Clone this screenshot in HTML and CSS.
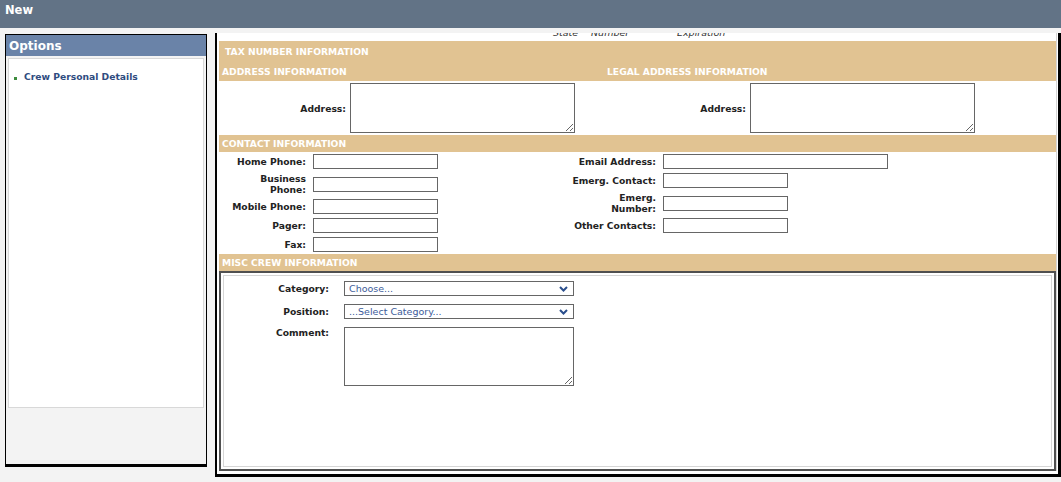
FILE: index.html
```html
<!doctype html>
<html>
<head>
<meta charset="utf-8">
<title>New</title>
<link rel="stylesheet" href="styles.css">
</head>

<body>
<div class="topbar">New</div>
<div class="wrap">
	<div class="side">
		<div class="side-head">Options</div>
		<div class="side-box">
			<ul class="menu">
				<li><a href="#">Crew Personal Details</a></li>
			</ul>
		</div>
	</div>
	<div class="main">
		<div class="inner">
			<div class="cut">
				<div class="cut-row"><span class="c1">State</span><span class="c2">Number</span><span class="c3">Expiration</span></div>
			</div>
			<div class="band tall">
				<div class="band-row1">TAX NUMBER INFORMATION</div>
				<div class="band-row2"><span class="half">ADDRESS INFORMATION</span><span>LEGAL ADDRESS INFORMATION</span></div>
			</div>
			<div class="addr">
				<div class="addr-col"><label>Address:</label><textarea></textarea></div>
				<div class="addr-col"><label>Address:</label><textarea></textarea></div>
			</div>
			<div class="band">CONTACT INFORMATION</div>
			<div class="contact">
				<div class="fields left">
					<label>Home Phone:</label><input type="text">
					<label>Business<br>Phone:</label><input type="text">
					<label>Mobile Phone:</label><input type="text">
					<label>Pager:</label><input type="text">
					<label>Fax:</label><input type="text">
				</div>
				<div class="fields">
					<label>Email Address:</label><input type="text" class="wide">
					<label>Emerg. Contact:</label><input type="text">
					<label>Emerg.<br>Number:</label><input type="text">
					<label>Other Contacts:</label><input type="text">
				</div>
			</div>
			<div class="band">MISC CREW INFORMATION</div>
			<div class="misc">
				<div class="misc-inner">
					<div class="fields misc-grid">
						<label>Category:</label>
						<span class="sel"><select><option>Choose...</option></select><svg width="9" height="6" viewBox="0 0 9 6"><path d="M1 1 L4.5 4.5 L8 1" fill="none" stroke="#2a4e8c" stroke-width="2"/></svg></span>
						<label>Position:</label>
						<span class="sel"><select><option>...Select Category...</option></select><svg width="9" height="6" viewBox="0 0 9 6"><path d="M1 1 L4.5 4.5 L8 1" fill="none" stroke="#2a4e8c" stroke-width="2"/></svg></span>
						<label class="top">Comment:</label>
						<textarea class="comment"></textarea>
					</div>
				</div>
			</div>
		</div>
	</div>
</div>
</body>
</html>
```

FILE: styles.css
```css
body,ul { margin:0; padding:0;}
body { background:#f3f3f3; font-family:"DejaVu Sans",sans-serif; font-size:9.2px; color:#222;}
li { list-style:none;}

.topbar { height:28px; background:#627386; color:#fff; font-weight:bold; font-size:11.5px; line-height:21px; padding-left:5px;}

.wrap { display:flex; align-items:flex-start; gap:8px; padding-left:5px; margin-top:5px;}

.side { width:202px; height:433px; box-sizing:border-box; margin-top:1px; border:1px solid #000; border-bottom-width:3px; background:#f3f3f3;}
.side-head { height:21px; line-height:22px; padding-left:3px; background:#6a83a8; color:#fff; font-weight:bold; font-size:12px;}
.side-box { height:350px; box-sizing:border-box; margin:2px 2px 0; border:1px solid #d8d8d8; background:#fff;}
.menu { padding:12px 0 0 5px;}
.menu li { display:flex; align-items:center; line-height:12px;}
.menu li:before { content:""; width:3px; height:3px; margin:3px 7px 0 0; background:#3d8c3d;}
.menu a { color:#2f4c7f; font-weight:bold; text-decoration:none;}

.main { flex:1; background:#fff; border-left:2px solid #000; border-right:3px solid #000; border-bottom:3px solid #000; padding:0 1px 3px 2px;}
.inner { border-right:1px solid #d4d4d4;}

.cut { height:8px; overflow:hidden;}
.cut-row { display:flex; margin-top:-6px; padding-left:334px; line-height:12px; font-size:9.5px; font-style:italic; color:#333;}
.c1 { width:38px;}
.c2 { width:86px;}

.band { height:17px; line-height:17px; padding-left:3px; background:#e1c392; color:#fff; font-weight:bold;}
.band.tall { height:40px; padding:0;}
.band-row1 { height:22px; line-height:22px; padding-left:6px;}
.band-row2 { display:flex; height:18px; line-height:18px; padding-left:3px;}
.band-row2 .half { width:385px;}

label { font-weight:bold;}
textarea { display:block; box-sizing:border-box; margin:0; padding:1px; border:1px solid #666; font-size:10px;}
input { width:125px; height:15px; box-sizing:border-box; margin:0; padding:0 2px; border:1px solid #666; font-size:10px;}
input.wide { width:225px;}

.addr { display:flex; padding:2px 0;}
.addr-col { display:flex; align-items:center; gap:4px; width:400px;}
.addr-col label { width:127px; text-align:right;}
.addr-col textarea { width:225px; height:50px;}

.contact { display:flex; align-items:flex-start; padding:2px 0;}
.fields { display:grid; grid-template-columns:87px auto; column-gap:7px; row-gap:4px; align-items:center; justify-items:start;}
.fields label { justify-self:end; text-align:right; line-height:11px; white-space:nowrap;}
.fields.left { width:350px;}

.misc { display:flex; height:200px; box-sizing:border-box; border:2px solid #505050; padding:2px;}
.misc-inner { flex:1; border:1px solid #d6d6d6;}
.misc-grid { grid-template-columns:105px auto; column-gap:15px; row-gap:8px; padding-top:5px;}
.misc-grid label.top { align-self:start;}
.sel { position:relative; display:block; width:230px; height:15px;}
.sel select { -webkit-appearance:none; appearance:none; display:block; width:230px; height:15px; box-sizing:border-box; margin:0; padding:0 0 0 4px; border:1px solid #666; border-radius:0; background:#fff; color:#3d5c9a; font-family:"DejaVu Sans",sans-serif; font-size:9.5px; line-height:13px;}
.sel svg { position:absolute; right:6px; top:5px;}
.comment { width:230px; height:59px;}
```
